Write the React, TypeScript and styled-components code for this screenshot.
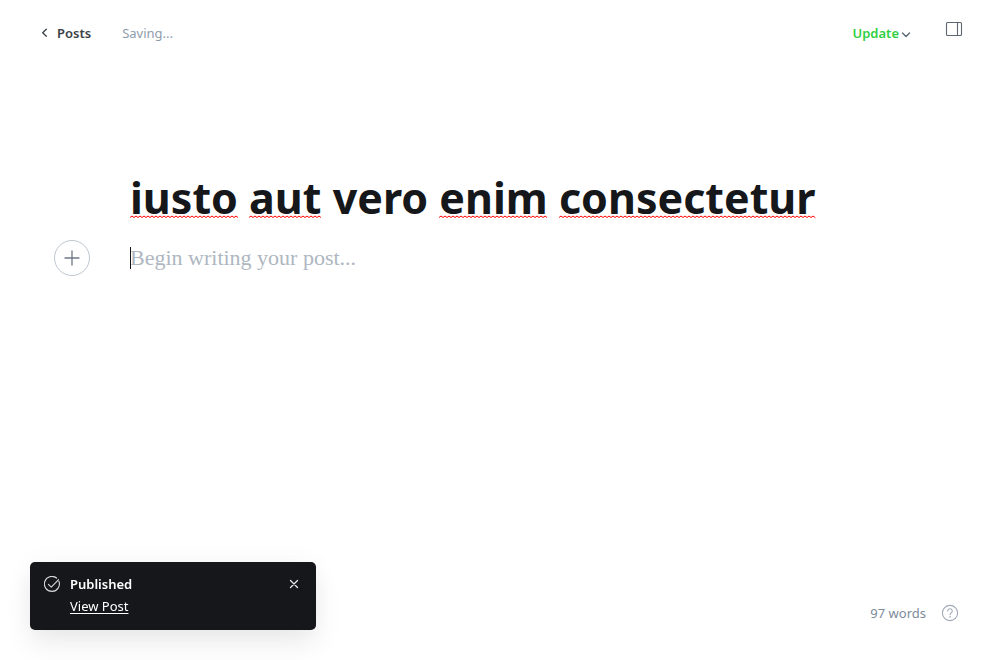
import React, { useLayoutEffect, useState } from "react";
import styled, { createGlobalStyle } from "styled-components";

const sans = `"Noto Sans", "Open Sans", sans-serif`;
const serif = `"Liberation Serif", Georgia, serif`;

const GlobalStyle = createGlobalStyle`
  *, *::before, *::after { box-sizing: border-box; }
  body { margin: 0; background: #fff; color: #15171a; font-family: ${sans}; font-size: 13px; line-height: 20px; }
  button, input, textarea { font: inherit; color: inherit; }
  button { padding: 0; border: 0; background: none; cursor: pointer; }
  svg { display: block; fill: none; stroke: currentColor; stroke-linecap: round; stroke-linejoin: round; }
`;

const Page = styled.div`
  display: flex;
  flex-direction: column;
  min-height: 100vh;
`;

const TopBar = styled.header`
  display: flex;
  align-items: flex-start;
  justify-content: space-between;
  padding: 20px 37px 0 40px;
`;

const BarGroup = styled.div<{ $gap: number }>`
  display: flex;
  gap: ${(p) => p.$gap}px;
`;

const BackLink = styled.a`
  display: flex;
  align-items: center;
  gap: 7px;
  height: 26px;
  color: #394047;
  font-weight: 600;
  text-decoration: none;
`;

const Status = styled.span`
  color: #8e9cac;
  line-height: 26px;
`;

const UpdateButton = styled.button`
  display: flex;
  align-items: center;
  gap: 2px;
  height: 26px;
  color: #30cf43;
  font-weight: 600;

  svg { color: #5d6774; margin-top: 4px; }
`;

const PanelButton = styled.button`
  height: 18px;
  color: #5d6671;
`;

const Editor = styled.main`
  flex: 1;
  padding: 121px 130px 40px;
`;

const TitleField = styled.div`
  position: relative;
`;

const TitleInput = styled.input`
  display: block;
  width: 100%;
  height: 60px;
  padding: 0;
  border: 0;
  outline: 0;
  background: none;
  color: #15171a;
  font-family: ${sans};
  font-size: 43px;
  font-weight: 700;
`;

const SpellMark = styled.svg`
  position: absolute;
  top: 48px;
  height: 4px;
  pointer-events: none;
`;

const BodyField = styled.div`
  position: relative;
  display: flex;
  align-items: flex-start;
  gap: 40px;
  margin: 13px 0 0 -76px;
`;

const AddButton = styled.button`
  display: grid;
  place-items: center;
  flex: none;
  width: 36px;
  height: 36px;
  border: 1px solid #bdc6cf;
  border-radius: 50%;
  color: #6d7885;
`;

const BodyInput = styled.textarea`
  flex: 1;
  height: 120px;
  padding: 2px 0 0;
  border: 0;
  outline: 0;
  resize: none;
  background: none;
  font-family: ${serif};
  font-size: 22px;
  line-height: 32px;

  &::placeholder { color: #aeb7c1; opacity: 1; }
`;

const Caret = styled.span`
  position: absolute;
  left: 76px;
  top: 7px;
  width: 1px;
  height: 22px;
  background: #15171a;
`;

const Footer = styled.footer`
  display: flex;
  align-items: center;
  justify-content: flex-end;
  gap: 15px;
  padding: 0 41px 37px;
  color: #7c8b9a;
`;

const HelpLink = styled.a`
  color: #a0a9b5;
`;

const Toast = styled.aside`
  position: fixed;
  left: 30px;
  bottom: 30px;
  display: flex;
  align-items: flex-start;
  gap: 10px;
  width: 286px;
  padding: 12px 16px 14px 14px;
  border-radius: 5px;
  background: #15171a;
  color: #fff;
  box-shadow: 0 0 28px rgba(0, 0, 0, 0.04), 0 14px 28px rgba(0, 0, 0, 0.08);
`;

const ToastText = styled.div`
  display: flex;
  flex: 1;
  flex-direction: column;
  align-items: flex-start;
  gap: 2px;
`;

const ToastTitle = styled.strong`
  font-weight: 600;
`;

const ToastLink = styled.a`
  color: #fff;
  text-decoration: underline;
  text-underline-offset: 2px;
`;

const ToastIcon = styled.svg`
  flex: none;
  margin-top: 2px;
  color: #d5d8dc;
`;

const CloseButton = styled.button`
  margin-top: 4px;
  color: #e8eaed;
`;

type Mark = { left: number; width: number };

const known = ["vero"];

function useSpellMarks(text: string): Mark[] {
  const [marks, setMarks] = useState<Mark[]>([]);
  useLayoutEffect(() => {
    const ctx = document.createElement("canvas").getContext("2d");
    if (!ctx) return;
    ctx.font = `700 43px ${sans}`;
    const next: Mark[] = [];
    for (const m of text.matchAll(/\S+/g)) {
      if (known.includes(m[0])) continue;
      next.push({
        left: Math.round(ctx.measureText(text.slice(0, m.index)).width),
        width: Math.round(ctx.measureText(m[0]).width),
      });
    }
    setMarks(next);
  }, [text]);
  return marks;
}

function Squiggle({ left, width }: Mark) {
  let d = "M0 2.500";
  for (let x = 2, up = true; x <= width; x += 2, up = !up) d += `L${x} ${up ? 1 : 2.5}`;
  return (
    <SpellMark style={{ left, width }} aria-hidden="true">
      <path d={d} stroke="#f00" strokeWidth="1" />
    </SpellMark>
  );
}

export default function App() {
  const [title, setTitle] = useState("iusto aut vero enim consectetur");
  const [body, setBody] = useState("");
  const [toastOpen, setToastOpen] = useState(true);
  const marks = useSpellMarks(title);

  return (
    <Page>
      <GlobalStyle />
      <TopBar>
        <BarGroup $gap={31}>
          <BackLink href="#posts">
            <svg width="10" height="10" viewBox="0 0 10 10" strokeWidth="1.3" aria-hidden="true">
              <path d="M6.3 1.2 2.7 4.7l3.6 3.5" />
            </svg>
            Posts
          </BackLink>
          <Status>Saving...</Status>
        </BarGroup>
        <BarGroup $gap={34}>
          <UpdateButton type="button">
            Update
            <svg width="10" height="8" viewBox="0 0 10 8" strokeWidth="1.4" aria-hidden="true">
              <path d="M1.5 2 5 5.5 8.500 2" />
            </svg>
          </UpdateButton>
          <PanelButton type="button" aria-label="Settings">
            <svg width="18" height="18" viewBox="0 0 18 18" strokeWidth="1.1" aria-hidden="true">
              <rect x="1.5" y="2.500" width="15" height="13" rx="1" />
              <path d="M12.500 2.500v13" />
            </svg>
          </PanelButton>
        </BarGroup>
      </TopBar>

      <Editor>
        <TitleField>
          <TitleInput aria-label="Post title" spellCheck={false} value={title} onChange={(e) => setTitle(e.target.value)} />
          {marks.map((m) => (
            <Squiggle key={m.left} {...m} />
          ))}
        </TitleField>
        <BodyField>
          <AddButton type="button" aria-label="Add a card">
            <svg width="16" height="16" viewBox="0 0 16 16" strokeWidth="1.3" aria-hidden="true">
              <path d="M8 1v14M1 8h14" />
            </svg>
          </AddButton>
          <BodyInput
            aria-label="Post body"
            placeholder="Begin writing your post..."
            value={body}
            onChange={(e) => setBody(e.target.value)}
          />
          {body === "" && <Caret />}
        </BodyField>
      </Editor>

      <Footer>
        <span>97 words</span>
        <HelpLink href="#help" aria-label="Help">
          <svg width="18" height="18" viewBox="0 0 18 18" strokeWidth="1.1" aria-hidden="true">
            <circle cx="9" cy="9" r="7.6" />
            <path d="M6.700 7.100a2.300 2.300 0 1 1 3.400 2c-.8.450-1.100.8-1.100 1.600" />
            <circle cx="9" cy="12.900" r=".4" fill="currentColor" strokeWidth=".6" />
          </svg>
        </HelpLink>
      </Footer>

      {toastOpen && (
        <Toast role="status">
          <ToastIcon width="16" height="16" viewBox="0 0 16 16" strokeWidth="1.1" aria-hidden="true">
            <path d="M14.900 5.200A7.500 7.500 0 1 1 12.600 2.050" />
            <path d="m4.400 8.300 2.900 2.900 7.300-7.600" />
          </ToastIcon>
          <ToastText>
            <ToastTitle>Published</ToastTitle>
            <ToastLink href="#post">View Post</ToastLink>
          </ToastText>
          <CloseButton type="button" aria-label="Close" onClick={() => setToastOpen(false)}>
            <svg width="12" height="12" viewBox="0 0 12 12" strokeWidth="1.300" aria-hidden="true">
              <path d="m2.500 2.500 7 7M9.500 2.500l-7 7" />
            </svg>
          </CloseButton>
        </Toast>
      )}
    </Page>
  );
}
